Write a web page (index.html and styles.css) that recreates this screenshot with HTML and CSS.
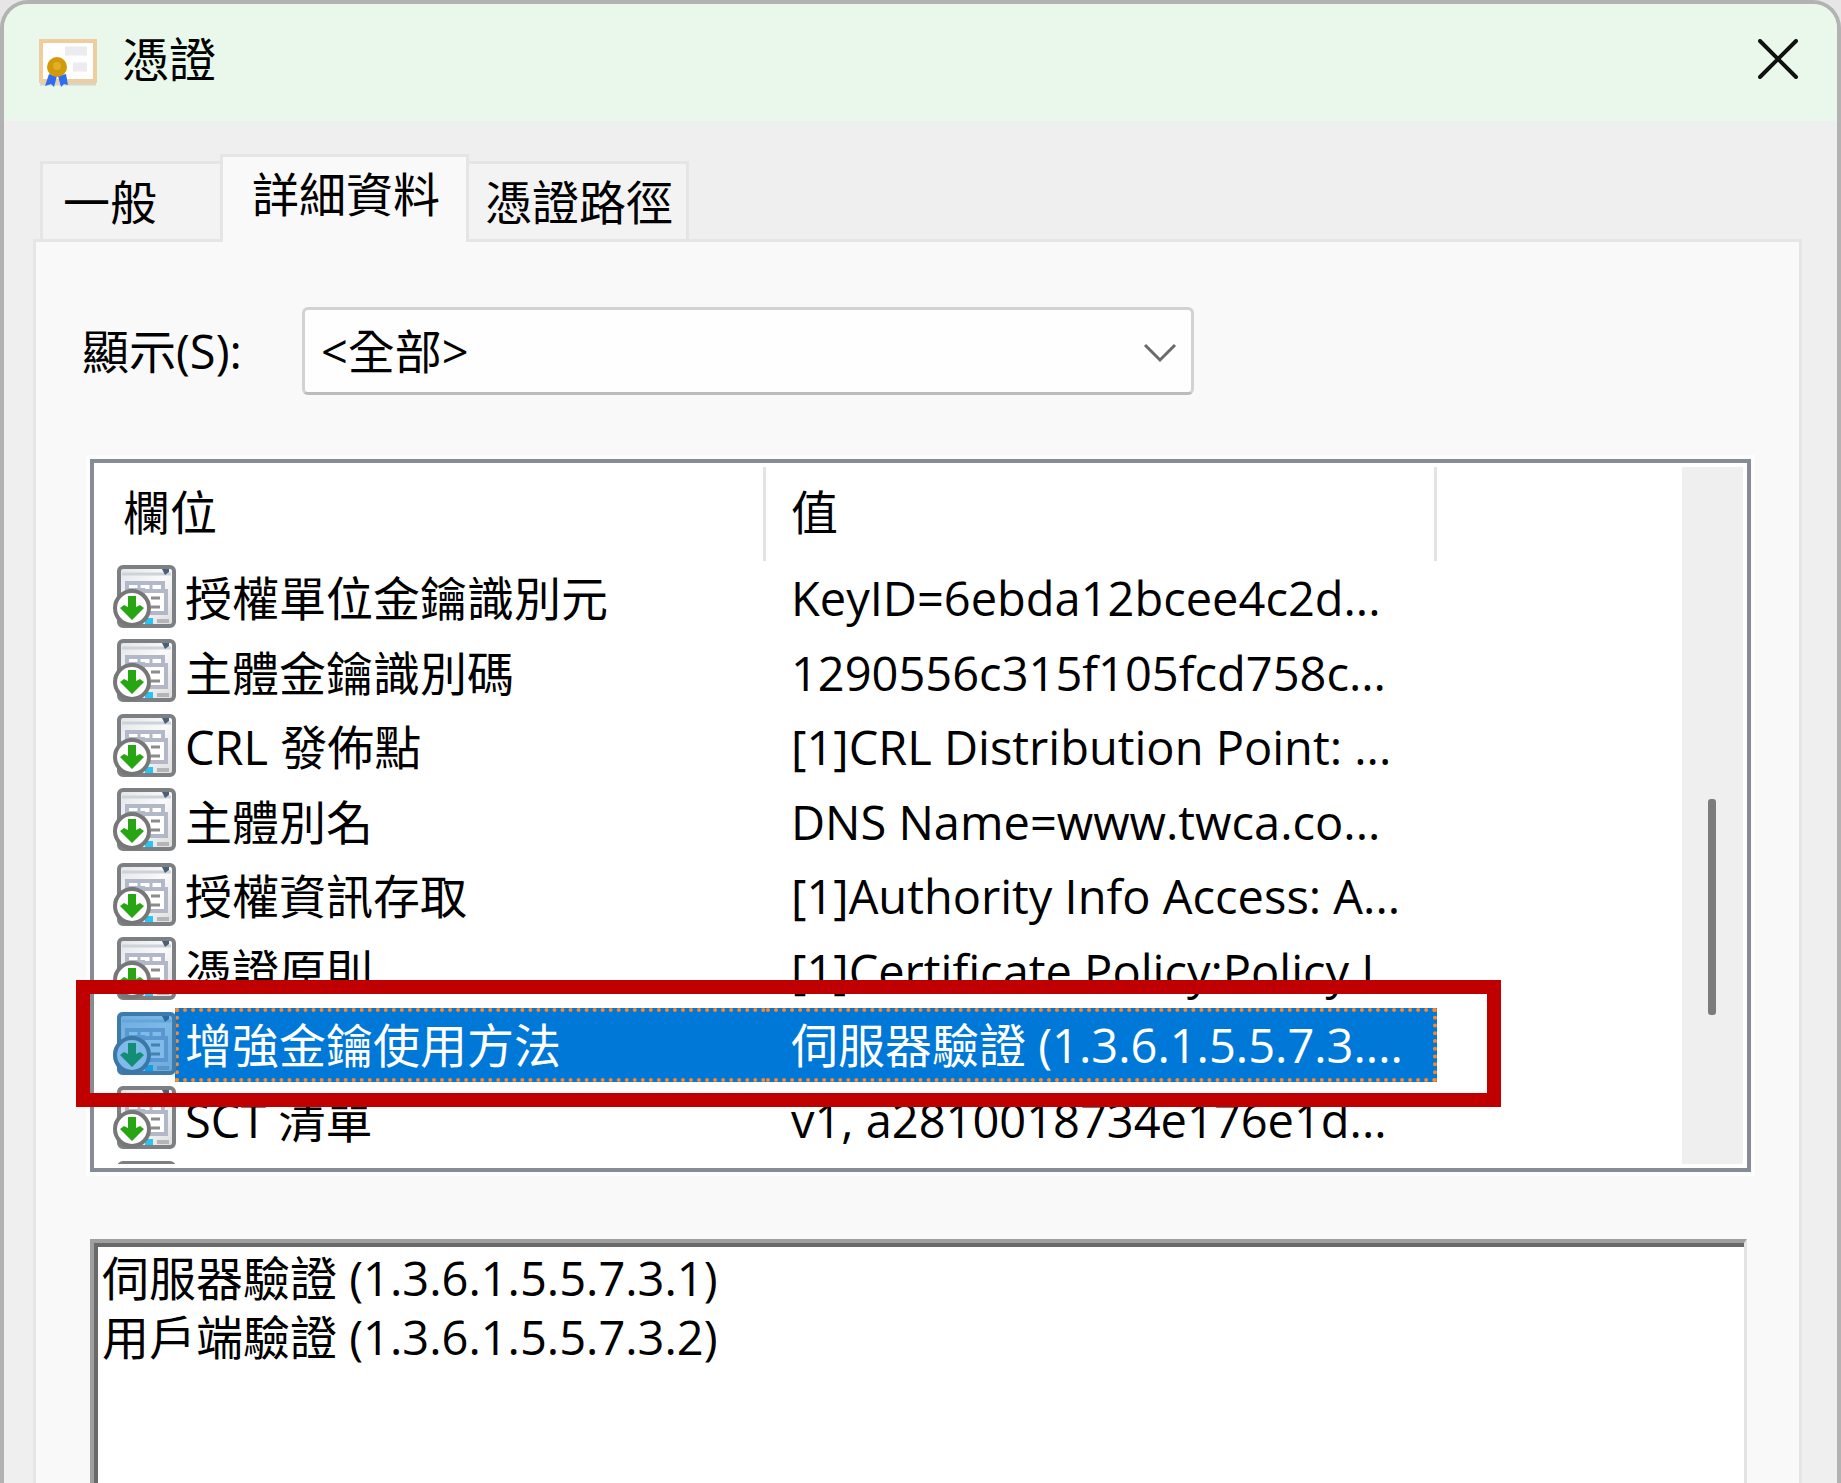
FILE: index.html
```html
<!DOCTYPE html>
<html lang="zh-Hant">
<head>
    <meta charset="UTF-8">
    <meta name="viewport" content="width=device-width, initial-scale=1.0">
    <title>憑證</title>
    <link rel="stylesheet" href="styles.css">
</head>
<body>
    <!-- shared row icon -->
    <svg class="sprite" aria-hidden="true">
        <defs>
            <linearGradient id="page-fill" x1="0" y1="0" x2="1" y2="1">
                <stop offset="0" stop-color="#e2e5e9"/>
                <stop offset="0.5" stop-color="#fafafa"/>
                <stop offset="1" stop-color="#dcdcdc"/>
            </linearGradient>
            <symbol id="ext-icon" viewBox="0 0 64 64">
                <rect x="6" y="2" width="55" height="59" rx="4" fill="url(#page-fill)" stroke="#7d8083" stroke-width="4"/>
                <path d="M9 9h49" stroke="#cdd3d8" stroke-width="3"/>
                <path d="M49 4h7v3l-4 3z" fill="#4a6078"/>
                <path d="M14 25V18h36v8h3v22H30V25z" fill="#fff" stroke="#b3b8c8" stroke-width="4"/>
                <path d="M12 26h42" stroke="#b3b8c8" stroke-width="4"/>
                <path d="M26 17v8M38 17v8" stroke="#b3b8c8" stroke-width="3"/>
                <path d="M38 33h9M38 42h9" stroke="#8c8c8c" stroke-width="3"/>
                <path d="M44 56h12" stroke="#b5b5b5" stroke-width="4"/>
                <path d="M32 53h8v6h-8z" fill="#28c4f4"/>
                <circle cx="19" cy="43" r="17" fill="#fff" stroke="#777" stroke-width="4"/>
                <path d="M15 31h8v11l4-2 4 3-12 12L7 43l4-3 4 2z" fill="#27a512"/>
            </symbol>
            <symbol id="ext-icon-shape" viewBox="0 0 64 64">
                <rect x="4" y="0" width="59" height="63" rx="5"/>
                <circle cx="19" cy="43" r="19"/>
            </symbol>
        </defs>
    </svg>

    <div class="window">
        <header class="title-bar">
            <svg class="title-icon" viewBox="0 0 60 50" aria-hidden="true">
                <rect x="3" y="3" width="54" height="40" fill="#fff" stroke="#efcd9e" stroke-width="4"/>
                <path d="M2 46h56" stroke="#d9d5c4" stroke-width="3"/>
                <path d="M27 13h22M35 29h14" stroke="#ececf0" stroke-width="9"/>
                <path d="M11 36l8 2-3 11-3-3-6 2zM28 36l-8 2 3 11 3-3 4 1z" fill="#2f6df0"/>
                <circle cx="19" cy="29" r="10" fill="#d39a08"/>
                <circle cx="19" cy="28" r="4" fill="#e0ae2c"/>
            </svg>
            <h1 class="title">憑證</h1>
            <button class="close-button" type="button" aria-label="關閉">
                <svg viewBox="0 0 40 40" aria-hidden="true"><path d="M2 2l36 36M38 2L2 38"/></svg>
            </button>
        </header>

        <main class="content">
            <nav class="tabs" role="tablist">
                <button class="tab tab-general" type="button" role="tab">一般</button>
                <button class="tab active" type="button" role="tab" aria-selected="true">詳細資料</button>
                <button class="tab" type="button" role="tab">憑證路徑</button>
            </nav>

            <section class="panel">
                <div class="filter">
                    <label for="show">顯示(S):</label>
                    <div class="select-box">
                        <select id="show">
                            <option>&lt;全部&gt;</option>
                        </select>
                        <svg class="chevron" viewBox="0 0 34 20" aria-hidden="true"><path d="M2 2l15 15L32 2"/></svg>
                    </div>
                </div>

                <div class="list">
                    <div class="list-view">
                        <table class="fields">
                            <colgroup>
                                <col class="col-icon">
                                <col class="col-field">
                                <col class="col-value">
                                <col>
                            </colgroup>
                            <thead>
                                <tr>
                                    <th colspan="2">欄位</th>
                                    <th>值</th>
                                    <td></td>
                                </tr>
                            </thead>
                            <tbody>
                                <tr>
                                    <td class="icon-cell"><svg class="row-icon"><use href="#ext-icon"/></svg></td>
                                    <td>授權單位金鑰識別元</td>
                                    <td>KeyID=6ebda12bcee4c2d...</td>
                                </tr>
                                <tr>
                                    <td class="icon-cell"><svg class="row-icon"><use href="#ext-icon"/></svg></td>
                                    <td>主體金鑰識別碼</td>
                                    <td>1290556c315f105fcd758c...</td>
                                </tr>
                                <tr>
                                    <td class="icon-cell"><svg class="row-icon"><use href="#ext-icon"/></svg></td>
                                    <td>CRL 發佈點</td>
                                    <td>[1]CRL Distribution Point: ...</td>
                                </tr>
                                <tr>
                                    <td class="icon-cell"><svg class="row-icon"><use href="#ext-icon"/></svg></td>
                                    <td>主體別名</td>
                                    <td>DNS Name=www.twca.co...</td>
                                </tr>
                                <tr>
                                    <td class="icon-cell"><svg class="row-icon"><use href="#ext-icon"/></svg></td>
                                    <td>授權資訊存取</td>
                                    <td>[1]Authority Info Access: A...</td>
                                </tr>
                                <tr>
                                    <td class="icon-cell"><svg class="row-icon"><use href="#ext-icon"/></svg></td>
                                    <td>憑證原則</td>
                                    <td>[1]Certificate Policy:Policy I...</td>
                                </tr>
                                <tr class="selected">
                                    <td class="icon-cell"><svg class="row-icon"><use href="#ext-icon"/><use class="tint" href="#ext-icon-shape"/></svg></td>
                                    <td>增強金鑰使用方法</td>
                                    <td>伺服器驗證 (1.3.6.1.5.5.7.3....</td>
                                </tr>
                                <tr>
                                    <td class="icon-cell"><svg class="row-icon"><use href="#ext-icon"/></svg></td>
                                    <td>SCT 清單</td>
                                    <td>v1, a2810018734e176e1d...</td>
                                </tr>
                                <tr>
                                    <td class="icon-cell"><svg class="row-icon"><use href="#ext-icon"/></svg></td>
                                    <td></td>
                                    <td></td>
                                </tr>
                            </tbody>
                        </table>
                    </div>
                    <div class="scrollbar"><div class="thumb"></div></div>
                    <div class="highlight"></div>
                </div>

                <textarea class="details" aria-label="值" readonly>伺服器驗證 (1.3.6.1.5.5.7.3.1)
用戶端驗證 (1.3.6.1.5.5.7.3.2)</textarea>
            </section>
        </main>
    </div>
</body>
</html>
```

FILE: styles.css
```css
* {
    margin: 0;
    padding: 0;
    box-sizing: border-box;
}

body {
    height: 100vh;
    overflow: hidden;
    background: #e6e6e6;
    color: #000;
    font-family: "Open Sans", "Noto Sans CJK TC", sans-serif;
    font-size: 47px;
    line-height: 60px;
}

button, select, textarea {
    font: inherit;
    color: inherit;
}

.sprite {
    position: absolute;
    width: 0;
    height: 0;
}

.window {
    display: flex;
    flex-direction: column;
    height: 100vh;
    border: 4px solid #b2b2b2;
    border-bottom: none;
    border-radius: 28px 28px 0 0;
    background: #efefef;
    overflow: hidden;
}

/* title bar */
.title-bar {
    display: flex;
    align-items: center;
    height: 117px;
    padding: 0 39px 8px 34px;
    background: #e9f8ea;
}

.title-icon {
    width: 60px;
    height: 50px;
    margin-top: 8px;
}

.title {
    flex: 1;
    margin-left: 24px;
    font-size: 47px;
    font-weight: 400;
}

.close-button {
    width: 40px;
    height: 40px;
    border: none;
    background: none;
}

.close-button svg {
    display: block;
    fill: none;
    stroke: #111;
    stroke-width: 4;
    stroke-linecap: round;
}

/* tabs */
.content {
    display: flex;
    flex: 1;
    flex-direction: column;
    padding: 33px 35px 0 29px;
}

.tabs {
    display: flex;
    align-items: flex-end;
    padding-left: 7px;
}

.tab {
    height: 78px;
    padding: 0 13px 0 16px;
    border: 3px solid #e5e5e5;
    border-bottom: none;
    border-left: none;
    background: #f3f3f3;
    white-space: nowrap;
}

.tab-general {
    padding-left: 20px;
    padding-right: 63px;
    border-left: 3px solid #e5e5e5;
    border-right: none;
}

.tab.active {
    z-index: 1;
    height: 88px;
    margin-bottom: -3px;
    padding: 0 26px 12px 29px;
    border-left: 3px solid #e5e5e5;
    background: #f9f9f9;
}

.panel {
    display: flex;
    flex: 1;
    flex-direction: column;
    padding: 65px 48px 0 54px;
    border: 3px solid #e5e5e5;
    border-bottom: none;
    background: #f9f9f9;
}

/* filter */
.filter {
    display: flex;
    align-items: center;
    margin-left: -8px;
}

.filter label {
    width: 220px;
    white-space: nowrap;
}

.select-box {
    position: relative;
    flex: 0 1 892px;
}

.select-box select {
    width: 100%;
    height: 88px;
    padding: 0 80px 0 16px;
    border: 3px solid #d2d2d2;
    border-bottom-color: #bcbcbc;
    border-radius: 6px;
    background: #fefefe;
    appearance: none;
}

.chevron {
    position: absolute;
    top: 36px;
    right: 17px;
    width: 34px;
    height: 20px;
    fill: none;
    stroke: #6a6a6a;
    stroke-width: 3;
    pointer-events: none;
}

/* field list */
.list {
    position: relative;
    display: flex;
    height: 713px;
    margin-top: 64px;
    padding: 4px;
    border: 4px solid #868c96;
    background: #fff;
    box-shadow: 0 0 0 4px #fdfdfd;
}

.list-view {
    flex: 1;
    overflow: hidden;
}

.fields {
    width: 100%;
    table-layout: fixed;
    border-collapse: separate;
    border-spacing: 0;
    text-align: left;
    white-space: nowrap;
}

.col-icon {
    width: 77px;
}

.col-field {
    width: 591px;
}

.col-value {
    width: 671px;
}

.fields th {
    height: 94px;
    padding: 0 0 4px 25px;
    border-right: 3px solid #e3e3e3;
    font-weight: 400;
}

.fields tbody td {
    height: 74px;
    padding-left: 10px;
}

.fields tbody tr:nth-child(even) td {
    height: 75px;
}

.fields tbody td:nth-child(3) {
    padding-left: 25px;
}

.fields tbody .icon-cell {
    padding: 4px 0 0 15px;
    vertical-align: top;
}

.row-icon {
    display: block;
    width: 64px;
    height: 64px;
}

.selected td:not(.icon-cell) {
    border: 4px dotted #ff8728;
    background: #0078d7;
    color: #fff;
}

.fields .selected td:nth-child(2) {
    padding-left: 6px;
    border-right: none;
}

.fields .selected td:nth-child(3) {
    border-left: none;
}

.tint {
    fill: #0078d7;
    opacity: 0.5;
}

.scrollbar {
    width: 61px;
    background: #efefef;
}

.thumb {
    width: 8px;
    height: 216px;
    margin: 332px auto 0 26px;
    border-radius: 3px;
    background: #7c7c7c;
}

/* red frame drawn over the selected row */
.highlight {
    position: absolute;
    top: 517px;
    left: -18px;
    right: 246px;
    height: 127px;
    border: 14px solid #c00000;
}

/* value of the selected field */
.details {
    flex: 1;
    width: calc(100% - 4px);
    margin-top: 67px;
    padding: 6px 8px;
    border: 4px solid #9f9f9f;
    border-right: 3px solid #e3e3e3;
    border-bottom: none;
    background: #fff;
    box-shadow: inset 4px 4px #696969;
    line-height: 59px;
    outline: none;
    resize: none;
}
```
